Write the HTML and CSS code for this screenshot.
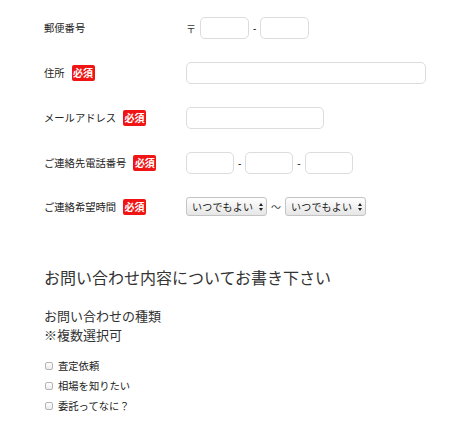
FILE: index.html
```html
<!DOCTYPE html>
<html lang="ja">
<head>
<meta charset="utf-8">
<title>お問い合わせ</title>
<link rel="stylesheet" href="styles.css">
</head>
<body>
<div class="form">
  <div class="row">
    <div class="label">郵便番号</div>
    <div class="field">
      <span class="mark">〒</span>
      <input class="inp w-zip" type="text">
      <span class="dash">-</span>
      <input class="inp w-zip" type="text">
    </div>
  </div>
  <div class="row">
    <div class="label">住所<span class="req">必須</span></div>
    <div class="field"><input class="inp w-addr" type="text"></div>
  </div>
  <div class="row">
    <div class="label">メールアドレス<span class="req">必須</span></div>
    <div class="field"><input class="inp w-mail" type="text"></div>
  </div>
  <div class="row">
    <div class="label">ご連絡先電話番号<span class="req">必須</span></div>
    <div class="field">
      <input class="inp w-tel" type="text">
      <span class="dash">-</span>
      <input class="inp w-tel" type="text">
      <span class="dash">-</span>
      <input class="inp w-tel" type="text">
    </div>
  </div>
  <div class="row">
    <div class="label">ご連絡希望時間<span class="req">必須</span></div>
    <div class="field">
      <span class="sel">
        <select><option>いつでもよい</option></select>
        <svg class="arrows" width="4" height="8" viewBox="0 0 4 8"><polygon points="0,3 2,0 4,3"/><polygon points="0,5 4,5 2,8"/></svg>
      </span>
      <span class="tilde">〜</span>
      <span class="sel">
        <select><option>いつでもよい</option></select>
        <svg class="arrows" width="4" height="8" viewBox="0 0 4 8"><polygon points="0,3 2,0 4,3"/><polygon points="0,5 4,5 2,8"/></svg>
      </span>
    </div>
  </div>

  <h2 class="heading">お問い合わせ内容についてお書き下さい</h2>
  <h3 class="sub">お問い合わせの種類<br>※複数選択可</h3>
  <ul class="checks">
    <li><label><input type="checkbox" class="cb">査定依頼</label></li>
    <li><label><input type="checkbox" class="cb">相場を知りたい</label></li>
    <li><label><input type="checkbox" class="cb">委託ってなに？</label></li>
  </ul>
</div>
</body>
</html>
```
FILE: styles.css
```css
body {
  margin: 0;
  background: #fff;
  color: #333;
  font-family: "Noto Sans CJK JP", "Noto Sans", sans-serif;
}
.form {
  padding: 5.5px 0 0 44px;
}
.row {
  display: flex;
  align-items: center;
  padding: 11.5px 0;
}
.label {
  width: 142px;
  flex: none;
  display: flex;
  align-items: center;
  gap: 7px;
  font-size: 10.3px;
  line-height: 14px;
  color: #222;
}
.req {
  background: #f01414;
  color: #fff;
  font-size: 10px;
  font-weight: bold;
  line-height: 12px;
  padding: 2px 1.5px;
  border-radius: 2px;
}
.field {
  display: flex;
  align-items: center;
  font-size: 10px;
}
.mark {
  width: 10px;
  margin-right: 4px;
  font-size: 10px;
  color: #333;
}
.dash {
  margin: 0 4px;
  font-family: "Liberation Sans", sans-serif;
  font-size: 10px;
  color: #222;
}
.tilde {
  margin: 0 4px;
  font-size: 10px;
  color: #444;
}
.inp {
  box-sizing: border-box;
  height: 22px;
  margin: 0;
  padding: 0 4px;
  border: 1px solid #dcdcdc;
  border-radius: 5px;
  background: #fff;
  outline: none;
}
.w-zip { width: 49px; }
.w-tel { width: 48px; }
.w-addr { width: 240px; }
.w-mail { width: 138px; }
.sel {
  position: relative;
  display: inline-flex;
}
.sel select {
  -webkit-appearance: none;
  appearance: none;
  box-sizing: border-box;
  width: 81px;
  height: 19px;
  margin: 0;
  padding: 0 10px 0 5px;
  border: 1px solid #c4c4c4;
  border-radius: 3px;
  background: linear-gradient(#fefefe, #e6e6e6);
  color: #222;
  font-family: "Noto Sans CJK JP", sans-serif;
  font-size: 10px;
  letter-spacing: 0.2px;
  line-height: 17px;
}
.arrows {
  position: absolute;
  right: 4px;
  top: 50%;
  transform: translateY(-50%);
  fill: #222;
  pointer-events: none;
}
.heading {
  margin: 37px 0 0;
  font-size: 16px;
  font-weight: normal;
  line-height: 24px;
  color: #333;
}
.sub {
  margin: 18.75px 0 0;
  font-size: 13px;
  font-weight: normal;
  line-height: 18.5px;
  color: #333;
}
.checks {
  list-style: none;
  margin: 12px 0 0;
  padding: 0;
}
.checks li {
  line-height: 20px;
  font-size: 10.3px;
  color: #222;
}
.checks label {
  display: flex;
  align-items: center;
}
.cb {
  -webkit-appearance: none;
  appearance: none;
  box-sizing: border-box;
  width: 8px;
  height: 8px;
  margin: 0 5px 0 1px;
  border: 1px solid #b5b5b5;
  border-radius: 2px;
  background: linear-gradient(#fff, #ececec);
}
```
